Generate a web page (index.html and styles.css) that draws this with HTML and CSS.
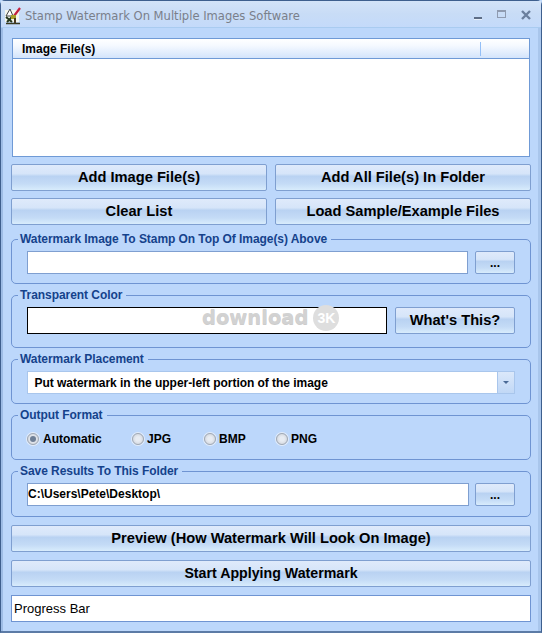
FILE: index.html
```html
<!DOCTYPE html>
<html lang="en">
<head>
<meta charset="utf-8">
<title>Stamp Watermark On Multiple Images Software</title>
<link rel="stylesheet" href="styles.css">
</head>
<body>
<div class="window">
  <header class="titlebar">
    <svg class="app-icon" width="16" height="18" viewBox="0 0 16 18">
      <rect x="0" y="3" width="14" height="12" fill="#f4f6ee"/>
      <path d="M1 16.500H15" stroke="#3a3a20" stroke-width="1.500"/>
      <path d="M5 2L1 9H8Z" fill="#fff" stroke="#444" stroke-width="1"/>
      <path d="M1 10L7 15M7 10L2 15" stroke="#24361c" stroke-width="2"/>
      <path d="M9 9L15 1" stroke="#c41f3e" stroke-width="2.200"/>
      <rect x="6" y="8" width="5" height="4" fill="#a8a028"/>
      <rect x="9" y="11" width="2" height="5" fill="#4a3a20"/>
    </svg>
    <span class="title-text">Stamp Watermark On Multiple Images Software</span>
    <div class="win-controls">
      <svg class="ctl-min" width="8" height="3" viewBox="0 0 8 3"><rect width="8" height="2" fill="#5d6d86"/><rect y="2" width="8" height="1" fill="#e6effb"/></svg>
      <svg width="9" height="9" viewBox="0 0 9 9"><rect x="0.500" y="0.500" width="8" height="7" fill="none" stroke="#8f9bb0"/><rect width="9" height="2" fill="#8f9bb0"/></svg>
      <svg width="10" height="10" viewBox="0 0 10 10"><path d="M1 1L9 9M9 1L1 9" stroke="#6b7f9d" stroke-width="2.400"/></svg>
    </div>
  </header>

  <main class="client">
    <section class="file-list">
      <div class="list-header">
        <span class="col-main">Image File(s)</span>
        <span class="col-end"></span>
      </div>
    </section>

    <div class="button-grid">
      <button class="btn btn-row">Add Image File(s)</button>
      <button class="btn btn-row">Add All File(s) In Folder</button>
      <button class="btn btn-row">Clear List</button>
      <button class="btn btn-row">Load Sample/Example Files</button>
    </div>

    <fieldset class="group group-stamp">
      <legend>Watermark Image To Stamp On Top Of Image(s) Above</legend>
      <div class="field-row">
        <div class="input input-stamp"></div>
        <button class="btn btn-dots">...</button>
      </div>
    </fieldset>

    <fieldset class="group group-color">
      <legend>Transparent Color</legend>
      <div class="field-row">
        <div class="color-box"></div>
        <button class="btn btn-whats">What's This?</button>
      </div>
      <div class="dl-mark">
        <span class="dl-word">download</span>
        <span class="dl-badge">3K</span>
      </div>
    </fieldset>

    <fieldset class="group group-place">
      <legend>Watermark Placement</legend>
      <div class="select">
        <span class="select-text">Put watermark in the upper-left portion of the image</span>
        <span class="select-arrow"><i></i></span>
      </div>
    </fieldset>

    <fieldset class="group group-format">
      <legend>Output Format</legend>
      <div class="radios">
        <label class="radio radio-auto"><span class="dot on"></span>Automatic</label>
        <label class="radio radio-jpg"><span class="dot"></span>JPG</label>
        <label class="radio radio-bmp"><span class="dot"></span>BMP</label>
        <label class="radio"><span class="dot"></span>PNG</label>
      </div>
    </fieldset>

    <fieldset class="group group-save">
      <legend>Save Results To This Folder</legend>
      <div class="field-row">
        <div class="input input-save">C:\Users\Pete\Desktop\</div>
        <button class="btn btn-dots">...</button>
      </div>
    </fieldset>

    <button class="btn btn-wide btn-preview">Preview (How Watermark Will Look On Image)</button>
    <button class="btn btn-wide btn-start">Start Applying Watermark</button>
    <div class="progress">Progress Bar</div>
  </main>
</div>
</body>
</html>
```
FILE: styles.css
```css
* { box-sizing: border-box; }
html, body { margin: 0; height: 100%; }
body { font-family: "Liberation Sans", Arial, sans-serif; color: #000; background: #bdd8fa; overflow: hidden; }

.window {
  width: 542px; height: 633px;
  display: flex; flex-direction: column;
  background: #bcd7fb;
  border: 1px solid #3e5f8e;
  border-radius: 5px 5px 0 0;
  border-bottom: 2px solid #5c7ba6;
}

.titlebar {
  height: 27px; flex: none;
  display: flex; align-items: center;
  padding: 4px 0 0 4px;
  background: linear-gradient(#d3e3f8, #c8dcf6 50%, #c4dafa);
  border-bottom: 1px solid #a9cbf0;
}
.app-icon { flex: none; }
.title-text {
  margin-left: 4px;
  font-family: "DejaVu Sans", Verdana, sans-serif;
  font-size: 11.55px;
  color: #7a7f8a;
  white-space: nowrap;
}
.win-controls {
  margin-left: auto; margin-right: 10px;
  display: flex; align-items: center; gap: 15px;
  padding-bottom: 3px;
}
.ctl-min { align-self: flex-end; }

.client {
  flex: 1;
  padding: 10px 8px 0 8px;
  border-left: 2px solid #9dbce6;
  border-right: 3px solid #a9c6ec;
  display: flex; flex-direction: column;
}

.file-list {
  height: 119px; width: 518px;
  margin-left: 1px;
  background: #fff;
  border: 1px solid #6f9ad6;
}
.list-header {
  height: 20px;
  display: flex; align-items: center;
  background: linear-gradient(#fff, #f5f9ff 35%, #d3e4fb);
  border-bottom: 1px solid #6f9ad6;
  font-size: 12px; font-weight: bold;
  padding: 1px 0 0 9px;
}
.col-main { flex: 1; }
.col-end { width: 49px; height: 14px; border-left: 1px solid #93bff7; }

.btn {
  font-family: inherit; font-weight: bold; color: #000;
  padding: 0 0 2px;
  background: linear-gradient(#dfeafb, #d6e5f9 35%, #b9d2f2 45%, #c4dbf6 75%, #d8ecfc);
  border: 1px solid #7f9fd0;
  border-radius: 2px;
  text-align: center;
}

.button-grid {
  margin-top: 7px;
  display: grid;
  grid-template-columns: 256px 256px;
  column-gap: 8px; row-gap: 7px;
}
.btn-row { height: 27px; font-size: 14.67px; }

.group {
  margin: 0; padding: 0 15px;
  width: 520px;
  border: 1px solid #6f94d2;
  border-radius: 5px;
  min-width: 0;
}
.group legend {
  padding: 0 4px 0 2px;
  margin-left: -9px;
  font-size: 12px; font-weight: bold;
  letter-spacing: -0.06px;
  color: #15428b;
  line-height: 14px;
}
.group-stamp { margin-top: 7px; height: 52px; }
.group-color { margin-top: 4px; height: 60px; position: relative; }
.group-place { margin-top: 4px; height: 52px; }
.group-format { margin-top: 4px; height: 52px; }
.group-save { margin-top: 4px; height: 53px; }

.field-row { display: flex; margin-top: 5px; }
.input {
  height: 23px;
  background: #fff;
  border: 1px solid #7f9fd0;
  font-size: 12px; font-weight: bold;
  line-height: 21px;
}
.input-stamp { width: 441px; }
.input-save { width: 442px; }
.btn-dots { width: 40px; height: 23px; margin-left: 7px; font-size: 12px; padding: 0; }
.group-save .btn-dots { margin-left: 6px; }

.color-box { width: 360px; height: 27px; background: #fff; border: 1px solid #000; }
.btn-whats { width: 120px; height: 27px; margin-left: 8px; font-size: 14.67px; }

.dl-mark {
  position: absolute; left: 190px; top: 3px;
  display: flex; align-items: center;
  pointer-events: none;
}
.dl-word {
  font-family: "DejaVu Sans", sans-serif;
  font-size: 19.5px; font-weight: bold;
  line-height: 24px;
  color: #d2d2d2;
  text-shadow: 0 1px 0 #cccccc;
}
.dl-badge {
  width: 26px; height: 26px; margin-left: 5px;
  border-radius: 50%;
  background: #dedede;
  color: #fff;
  font-size: 14px; font-weight: bold;
  line-height: 26px; text-align: center;
}

.select {
  margin-top: 5px;
  height: 23px; width: 488px;
  background: #fff;
  border: 1px solid #a9c6ec;
  display: flex; align-items: center;
  font-size: 12px; font-weight: bold;
  letter-spacing: -0.04px;
}
.select-text { flex: 1; padding-left: 6.500px; }
.select-arrow {
  width: 17px; height: 21px;
  display: flex; align-items: center; justify-content: center;
  background: linear-gradient(#dbe8fa, #c1d8f6);
  border-left: 1px solid #a9c6ec;
}
.select-arrow i {
  width: 0; height: 0; display: block;
  border: 3px solid transparent; border-bottom-width: 0;
  border-top-color: #4a6a96;
}

.radios { display: flex; margin-top: 10px; }
.radio {
  display: flex; align-items: center;
  font-size: 12px; font-weight: bold;
  line-height: 14px;
}
.radio-auto { width: 105px; }
.radio-jpg { width: 72px; }
.radio-bmp { width: 72px; }
.dot {
  width: 12px; height: 12px; margin-right: 3px;
  border-radius: 50%;
  border: 1px solid #a3a9b2;
  background: radial-gradient(circle, #e8ecf2 30%, #c9ced6 100%);
  box-shadow: 0 0 0 1px #e2ecfa;
  position: relative;
}
.radio-auto .dot { margin-right: 4px; }
.dot.on::after {
  content: ""; position: absolute; left: 2px; top: 2px;
  width: 6px; height: 6px; border-radius: 50%;
  background: #6e7f96;
}

.btn-wide { height: 27px; width: 520px; font-size: 14.67px; flex: none; }
.btn-preview { margin-top: 8px; }
.btn-start { margin-top: 8px; font-size: 14.200px; }
.progress {
  margin-top: 8px;
  height: 27px; width: 520px;
  background: #fff;
  border: 1px solid #6f94d2;
  font-size: 13px;
  line-height: 25px;
  padding-left: 2px;
}
```
